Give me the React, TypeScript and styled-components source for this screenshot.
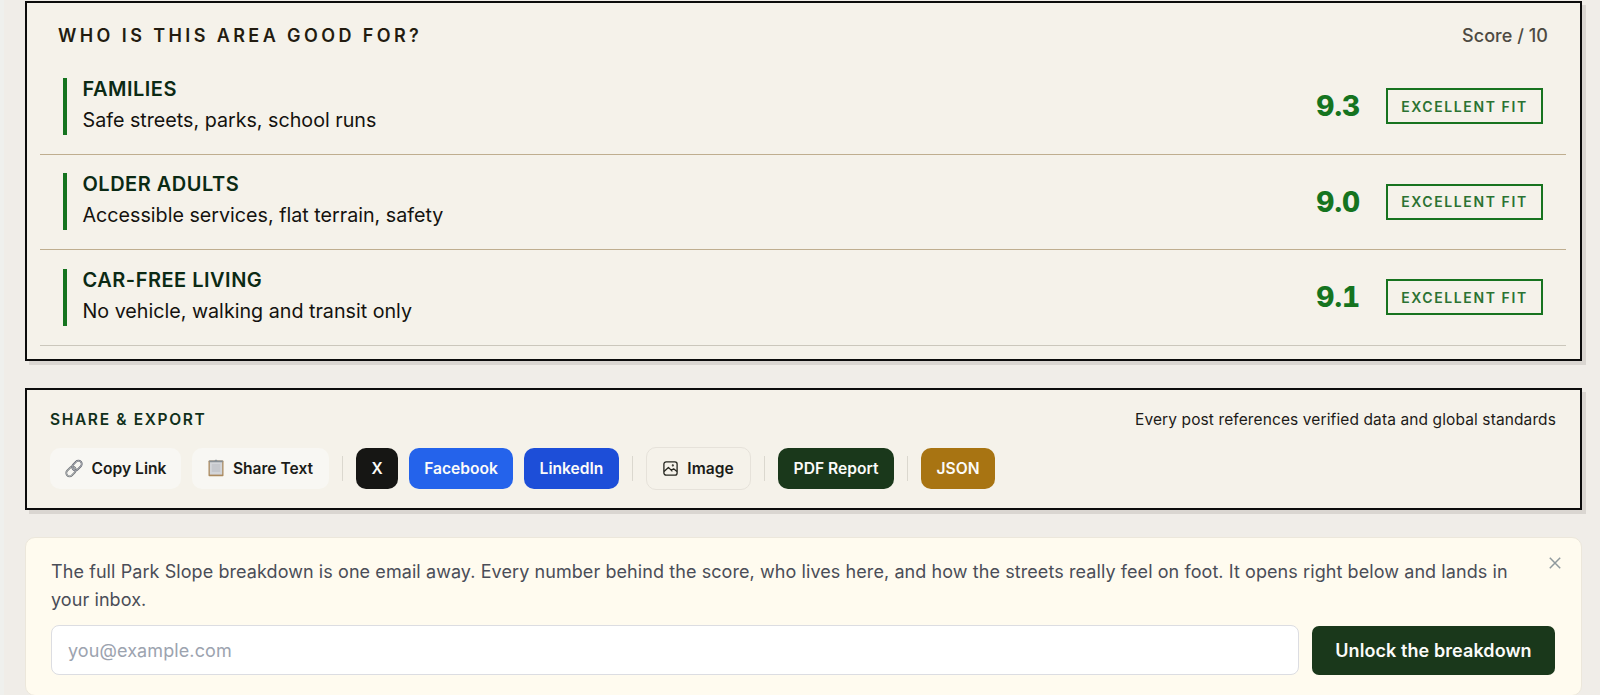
import React from "react";
import styled, { createGlobalStyle } from "styled-components";

const Global = createGlobalStyle`
  *, *::before, *::after { box-sizing: border-box; }
  body {
    margin: 0;
    background: linear-gradient(90deg, #eff0ed 0, #eff0ed 4px, #f0ede8 4px);
    font-family: Inter, "Liberation Sans", sans-serif;
    -webkit-font-smoothing: antialiased;
  }
`;

const Page = styled.main`
  height: 695px;
  overflow: hidden;
  display: flex;
  flex-direction: column;
  gap: 27px;
  padding: 1px 18px 0 25px;
`;

const Card = styled.section`
  flex: none;
  background: #f5f2ea;
  border: 2px solid #0c0c0c;
  box-shadow: 4px 4px 0 #dad6d1;
`;

const FitCard = styled(Card)`
  height: 360px;
  padding: 0 14px 0 13px;
`;

const FitHeader = styled.header`
  display: flex;
  align-items: center;
  justify-content: space-between;
  height: 56px;
  padding: 8px 18px 0;
`;

const FitTitle = styled.h2`
  margin: 0;
  font-size: 18px;
  font-weight: 600;
  letter-spacing: 3.4px;
  color: #231c10;
`;

const ScoreLabel = styled.span`
  font-size: 18px;
  font-weight: 500;
  letter-spacing: 0.05px;
  color: #4d4a42;
`;

const FitRow = styled.div<{ $last?: boolean }>`
  display: flex;
  align-items: center;
  height: 95.6px;
  padding: 0 23px 0 23px;
  border-bottom: 1px solid ${(p) => (p.$last ? "#cbc7bc" : "#bfae8f")};
`;

const FitText = styled.div`
  flex: 1;
  height: 57px;
  border-left: 4px solid #15741f;
  padding-left: 15.5px;
`;

const FitName = styled.div`
  font-size: 20px;
  line-height: 22px;
  font-weight: 600;
  letter-spacing: 0.5px;
  color: #0b2a14;
`;

const FitNote = styled.div`
  margin-top: 8px;
  font-size: 19.7px;
  line-height: 24px;
  color: #14120f;
`;

const FitScore = styled.div`
  margin-right: 26px;
  font-size: 28px;
  font-weight: 800;
  font-variant-numeric: tabular-nums;
  color: #15741f;
`;

const FitBadge = styled.div`
  display: flex;
  align-items: center;
  justify-content: center;
  width: 157px;
  height: 36px;
  border: 2px solid #17731f;
  font-size: 14px;
  font-weight: 600;
  letter-spacing: 1.6px;
  color: #2b7232;
`;

const ShareCard = styled(Card)`
  height: 122px;
  padding: 19px 24px 0 23px;
`;

const ShareHeader = styled.header`
  display: flex;
  align-items: center;
  justify-content: space-between;
  height: 20px;
`;

const ShareTitle = styled.h2`
  margin: 0;
  font-size: 15.5px;
  font-weight: 600;
  letter-spacing: 1.65px;
  color: #10301a;
`;

const ShareNote = styled.span`
  font-size: 15.5px;
  letter-spacing: 0.11px;
  color: #1c1a17;
`;

const Actions = styled.div`
  display: flex;
  align-items: center;
  gap: 11px;
  height: 42px;
  margin-top: 18px;
`;

const Action = styled.button<{ $bg: string; $fg?: string; $w: number; $line?: string }>`
  display: flex;
  align-items: center;
  justify-content: center;
  gap: 9px;
  flex: none;
  width: ${(p) => p.$w}px;
  height: ${(p) => (p.$line ? 43 : 41)}px;
  padding: 0;
  border: ${(p) => (p.$line ? `1px solid ${p.$line}` : "0")};
  border-radius: 10px;
  background: ${(p) => p.$bg};
  color: ${(p) => p.$fg ?? "#fbfbf9"};
  font: 600 15.6px Inter, "Liberation Sans", sans-serif;
`;

const Divider = styled.i`
  flex: none;
  width: 1px;
  height: 25px;
  margin: 0 2px;
  background: #dbd8cf;
`;

const SignupCard = styled.section`
  flex: none;
  position: relative;
  height: 159px;
  padding: 20px 26px 0 25px;
  border: 1px solid #ece7db;
  border-radius: 10px;
  background: #fffbef;
`;

const Pitch = styled.p`
  margin: 0 40px 11px 0;
  font-size: 18px;
  line-height: 28px;
  letter-spacing: 0.08px;
  color: #4a4d57;
`;

const SignupForm = styled.form`
  display: flex;
  align-items: center;
  gap: 13px;
`;

const EmailInput = styled.input`
  flex: 1;
  min-width: 0;
  height: 50px;
  padding: 0 16px;
  border: 1px solid #dcdde2;
  border-radius: 8px;
  background: #fff;
  font: 400 18px Inter, "Liberation Sans", sans-serif;
  letter-spacing: 0.1px;
  &::placeholder { color: #9ca3af; opacity: 1; }
`;

const Submit = styled.button`
  width: 243px;
  height: 49px;
  padding: 0;
  border: 0;
  border-radius: 7px;
  background: #1a381b;
  color: #fbfbf9;
  font: 600 18px Inter, "Liberation Sans", sans-serif;
  letter-spacing: 0.08px;
`;

const Close = styled.button`
  position: absolute;
  top: 19px;
  right: 20px;
  display: flex;
  padding: 0;
  border: 0;
  background: none;
`;

const LinkIcon = () => (
  <svg width="18" height="19" viewBox="0 0 19 19" fill="none">
    <g transform="rotate(-45 9.5 9.5)">
      <rect x="-0.6" y="6" width="11.4" height="7" rx="3.5" stroke="#6c7073" strokeWidth="1.9" />
      <rect x="-0.6" y="6" width="11.4" height="7" rx="3.5" stroke="#c0c4c8" strokeWidth="0.8" />
      <rect x="8.2" y="6" width="11.4" height="7" rx="3.5" stroke="#5c5f6b" strokeWidth="1.9" />
      <rect x="8.2" y="6" width="11.4" height="7" rx="3.5" stroke="#c0c4c8" strokeWidth="0.8" />
    </g>
  </svg>
);

const ClipboardIcon = () => (
  <svg width="16" height="18" viewBox="0 0 16 18">
    <rect x="0.5" y="1.5" width="15" height="15.8" rx="0.8" fill="#ab8a5e" />
    <rect x="1.8" y="2.6" width="12.4" height="13" fill="#d3d5d9" />
    <rect x="3.8" y="5" width="8.4" height="8" fill="#c6c8cd" />
    <path d="M1.2 1.4H6.4L8 0.4 9.6 1.4H14.8V3.2H1.2Z" fill="#888f95" />
  </svg>
);

const ImageIcon = () => (
  <svg width="15" height="15" viewBox="0 0 15 15" fill="none" stroke="#25261f" strokeWidth="1.3" strokeLinejoin="round">
    <rect x="0.9" y="0.9" width="13.2" height="13.2" rx="2.2" />
    <path d="M1 10.4 5.4 6.4 9.4 10.4M8 9.6 10.6 7.8 14 10.6" />
    <circle cx="9.8" cy="4.4" r="0.4" />
  </svg>
);

const fits = [
  { name: "FAMILIES", note: "Safe streets, parks, school runs", score: "9.3" },
  { name: "OLDER ADULTS", note: "Accessible services, flat terrain, safety", score: "9.0" },
  { name: "CAR-FREE LIVING", note: "No vehicle, walking and transit only", score: "9.1" },
];

export default function App() {
  return (
    <Page>
      <Global />
      <FitCard>
        <FitHeader>
          <FitTitle>WHO IS THIS AREA GOOD FOR?</FitTitle>
          <ScoreLabel>Score / 10</ScoreLabel>
        </FitHeader>
        {fits.map((f, i) => (
          <FitRow key={f.name} $last={i === fits.length - 1}>
            <FitText>
              <FitName>{f.name}</FitName>
              <FitNote>{f.note}</FitNote>
            </FitText>
            <FitScore>{f.score}</FitScore>
            <FitBadge>EXCELLENT FIT</FitBadge>
          </FitRow>
        ))}
      </FitCard>

      <ShareCard>
        <ShareHeader>
          <ShareTitle>SHARE &amp; EXPORT</ShareTitle>
          <ShareNote>Every post references verified data and global standards</ShareNote>
        </ShareHeader>
        <Actions>
          <Action $bg="#f8f7f3" $fg="#1b1c18" $w={131}><LinkIcon />Copy Link</Action>
          <Action $bg="#f8f7f3" $fg="#1b1c18" $w={137}><ClipboardIcon />Share Text</Action>
          <Divider />
          <Action $bg="#161614" $w={42}>X</Action>
          <Action $bg="#2463eb" $w={104}>Facebook</Action>
          <Action $bg="#1d4ed8" $w={95}>LinkedIn</Action>
          <Divider />
          <Action $bg="#f5f2ea" $fg="#1b1c18" $w={105} $line="#e6e2da"><ImageIcon />Image</Action>
          <Divider />
          <Action $bg="#1a381b" $w={116}>PDF Report</Action>
          <Divider />
          <Action $bg="#a87412" $w={74}>JSON</Action>
        </Actions>
      </ShareCard>

      <SignupCard>
        <Pitch>
          The full Park Slope breakdown is one email away. Every number behind the score, who lives
          here, and how the streets really feel on foot. It opens right below and lands in your inbox.
        </Pitch>
        <SignupForm>
          <EmailInput type="email" placeholder="you@example.com" />
          <Submit type="button">Unlock the breakdown</Submit>
        </SignupForm>
        <Close aria-label="Dismiss">
          <svg width="12" height="12" viewBox="0 0 12 12" stroke="#8f999d" strokeWidth="1.5">
            <path d="M0.8 0.8 11.2 11.2M11.2 0.8 0.8 11.2" />
          </svg>
        </Close>
      </SignupCard>
    </Page>
  );
}
